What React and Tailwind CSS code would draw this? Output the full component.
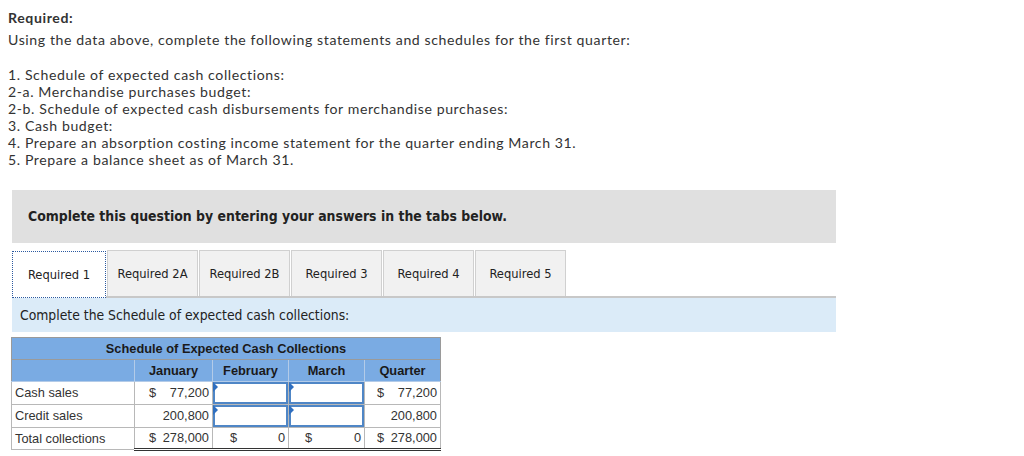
import React from 'react'

const TABS = ['Required 1', 'Required 2A', 'Required 2B', 'Required 3', 'Required 4', 'Required 5']

const LINES = [
  '1. Schedule of expected cash collections:',
  '2-a. Merchandise purchases budget:',
  '2-b. Schedule of expected cash disbursements for merchandise purchases:',
  '3. Cash budget:',
  '4. Prepare an absorption costing income statement for the quarter ending March 31.',
  '5. Prepare a balance sheet as of March 31.',
]

function InputCell() {
  return (
    <td className="p-0 border border-[#b8b8b8] h-[22px]">
      <div className="relative h-[22px] bg-white border-2 border-[#4f86c6]">
        <div className="absolute -left-[2px] -top-[2px] w-0 h-0 border-t-[5px] border-t-transparent border-b-[5px] border-b-transparent border-l-[5px] border-l-[#2f6fc0]" />
      </div>
    </td>
  )
}

function Money({ dollar, value, pad = 'pl-[14px]', last }) {
  return (
    <td className={`border border-[#b8b8b8] pr-[3px] h-[22px] ${pad} ${last ? 'border-b-[3px] border-double border-b-[#333]' : ''}`}>
      <div className="flex justify-between">
        <span>{dollar ? '$' : ''}</span>
        <span>{value}</span>
      </div>
    </td>
  )
}

export default function App() {
  return (
    <div className="w-[1024px] h-[456px] bg-white text-[#333] overflow-hidden">
      <div className="pl-2 pt-[9px] pb-[1px] font-['Lato',sans-serif] text-[14.1px] leading-[17px] tracking-[0.6px]">
        <div className="font-bold leading-[18px]">Required:</div>
        <div className="mt-[4px]">Using the data above, complete the following statements and schedules for the first quarter:</div>
        <div className="mt-[18px]">
          {LINES.map(l => <div key={l}>{l}</div>)}
        </div>
      </div>

      <div className="ml-3 w-[824px] mt-[21px]">
        <div className="h-[53px] bg-[#e0e0e0] flex items-center px-4 font-['DejaVu_Sans_Condensed','DejaVu_Sans',sans-serif] font-bold text-[13.9px] text-[#222]">
          Complete this question by entering your answers in the tabs below.
        </div>

        <div className="mt-[7px] flex items-end border-b-2 border-[#c8c8c8] font-['DejaVu_Sans_Condensed','DejaVu_Sans',sans-serif] text-[12.8px] text-[#222]">
          {TABS.map((t, i) => (
            <div
              key={t}
              className={i === 0
                ? 'w-[94px] h-[47px] -mb-[2px] bg-white border border-dotted border-[#2c5aa0] flex items-center justify-center'
                : 'w-[91px] h-[46px] ml-[1px] bg-[#f1f1f1] border border-[#d0d0d0] border-b-0 flex items-center justify-center'}
            >
              {t}
            </div>
          ))}
        </div>

        <div className="h-[34px] bg-[#dbebf8] flex items-center pl-2 font-['DejaVu_Sans_Condensed','DejaVu_Sans',sans-serif] text-[13.8px] text-[#222]">
          Complete the Schedule of expected cash collections:
        </div>
      </div>

      <table className="ml-[11px] mt-[5px] border-collapse font-['Liberation_Sans',Arial,sans-serif] text-[12.8px] text-[#333]">
        <thead>
          <tr className="bg-[#7aabe3]">
            <th colSpan={5} className="h-[22px] border border-[#9a9a9a] text-center font-bold text-[#1a1a1a]">
              Schedule of Expected Cash Collections
            </th>
          </tr>
          <tr className="bg-[#7aabe3] text-[#1a1a1a]">
            <th className="w-[123px] h-[22px] border border-[#b3cbe8] border-l-[#9a9a9a]" />
            <th className="w-[78px] border border-[#b3cbe8] font-bold">January</th>
            <th className="w-[76px] border border-[#b3cbe8] font-bold">February</th>
            <th className="w-[76px] border border-[#b3cbe8] font-bold">March</th>
            <th className="w-[76px] border border-[#b3cbe8] border-r-[#9a9a9a] font-bold">Quarter</th>
          </tr>
        </thead>
        <tbody>
          <tr>
            <td className="border border-[#b8b8b8] px-[3px] h-[22px]">Cash sales</td>
            <Money dollar value="77,200" />
            <InputCell />
            <InputCell />
            <Money dollar value="77,200" pad="pl-[12px]" />
          </tr>
          <tr>
            <td className="border border-[#b8b8b8] px-[3px] h-[22px]">Credit sales</td>
            <Money value="200,800" />
            <InputCell />
            <InputCell />
            <Money value="200,800" pad="pl-[12px]" />
          </tr>
          <tr>
            <td className="border border-[#b8b8b8] px-[3px] h-[22px]">Total collections</td>
            <Money dollar value="278,000" last />
            <Money dollar value="0" pad="pl-[17px]" last />
            <Money dollar value="0" pad="pl-[16px]" last />
            <Money dollar value="278,000" pad="pl-[12px]" last />
          </tr>
        </tbody>
      </table>
    </div>
  )
}
